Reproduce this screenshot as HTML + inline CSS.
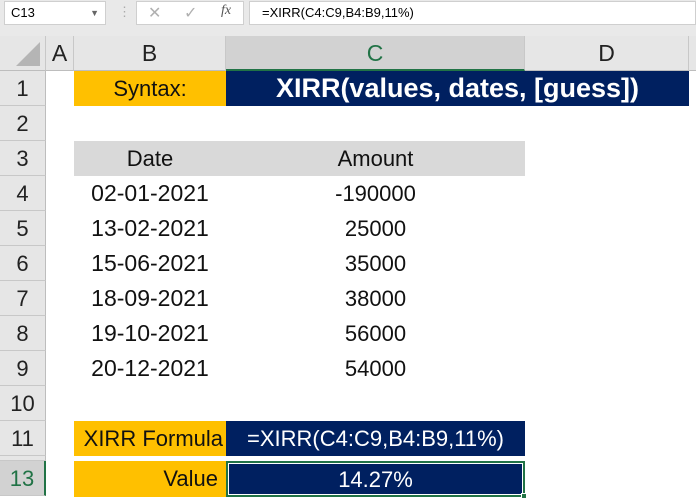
<!DOCTYPE html>
<html><head><style>
*{margin:0;padding:0;box-sizing:border-box}
body{width:696px;height:501px;overflow:hidden;background:#fff;font-family:"Liberation Sans",sans-serif;position:relative}
.a{position:absolute}
.rh{position:absolute;left:0;width:46px;background:#e6e6e6;border-bottom:1px solid #c8c8c8;border-right:1px solid #bdbdbd;text-align:center;font-size:22px;color:#222;height:35px;line-height:35px}
.ch{position:absolute;top:36px;height:35px;background:#e6e6e6;border-right:1px solid #c8c8c8;border-bottom:1px solid #bdbdbd;text-align:center;font-size:23px;line-height:34px;color:#222}
.t{position:absolute;font-size:22px;height:35px;line-height:35px;color:#111;white-space:nowrap}
</style></head><body>
<div class="a" style="left:0;top:0;width:696px;height:36px;background:#e9e9e9"></div>
<div class="a" style="left:4px;top:1px;width:102px;height:24px;background:#fff;border:1px solid #cfcfcf;font-size:13px;line-height:22px;padding-left:6px">C13<span style="position:absolute;right:6px;top:0;font-size:9px;color:#666">▼</span></div>
<div class="a" style="left:118px;top:4px;color:#aaa;font-size:13px">⋮</div>
<div class="a" style="left:136px;top:1px;width:108px;height:24px;background:#fff;border:1px solid #cfcfcf"></div>
<div class="a" style="left:148px;top:3px;color:#b0b0b0;font-size:16px">✕</div>
<div class="a" style="left:184px;top:3px;color:#b0b0b0;font-size:16px">✓</div>
<div class="a" style="left:221px;top:3px;color:#555;font-size:14px;font-style:italic;font-family:'Liberation Serif',serif">fx</div>
<div class="a" style="left:249px;top:1px;width:447px;height:24px;background:#fff;border:1px solid #cfcfcf;font-size:13px;line-height:22px;padding-left:12px">=XIRR(C4:C9,B4:B9,11%)</div>

<div class="ch" style="left:0;width:46px"><div style="position:absolute;right:5px;bottom:4px;width:0;height:0;border-left:24px solid transparent;border-bottom:24px solid #b5b5b5"></div></div>
<div class="ch" style="left:46px;width:28px">A</div>
<div class="ch" style="left:74px;width:152px">B</div>
<div class="ch" style="left:226px;width:299px;background:#d2d2d2;color:#217346;border-bottom:2px solid #217346">C</div>
<div class="ch" style="left:525px;width:164px">D</div>
<div class="ch" style="left:689px;width:10px"></div>

<div class="rh" style="top:71px">1</div>
<div class="rh" style="top:106px">2</div>
<div class="rh" style="top:141px">3</div>
<div class="rh" style="top:176px">4</div>
<div class="rh" style="top:211px">5</div>
<div class="rh" style="top:246px">6</div>
<div class="rh" style="top:281px">7</div>
<div class="rh" style="top:316px">8</div>
<div class="rh" style="top:351px">9</div>
<div class="rh" style="top:386px">10</div>
<div class="rh" style="top:421px">11</div>
<div class="rh" style="top:461px;background:#d2d2d2;color:#217346;border-right:2px solid #217346">13</div>
<div class="a" style="left:0;top:456px;width:46px;height:5px;background:#e6e6e6;border-right:1px solid #bdbdbd;border-bottom:1px solid #c8c8c8"></div>

<div class="a" style="left:74px;top:71px;width:152px;height:35px;background:#ffc000"></div>
<div class="t" style="left:74px;top:71px;width:152px;text-align:center">Syntax:</div>
<div class="a" style="left:226px;top:71px;width:463px;height:35px;background:#002060"></div>
<div class="t" style="left:226px;top:71px;width:463px;text-align:center;color:#fff;font-weight:bold;font-size:27px">XIRR(values, dates, [guess])</div>

<div class="a" style="left:74px;top:141px;width:451px;height:35px;background:#d9d9d9"></div>
<div class="t" style="left:74px;top:141px;width:152px;text-align:center">Date</div>
<div class="t" style="left:226px;top:141px;width:299px;text-align:center">Amount</div>

<div class="t" style="left:74px;top:176px;width:152px;text-align:center;font-size:23px">02-01-2021</div>
<div class="t" style="left:74px;top:211px;width:152px;text-align:center;font-size:23px">13-02-2021</div>
<div class="t" style="left:74px;top:246px;width:152px;text-align:center;font-size:23px">15-06-2021</div>
<div class="t" style="left:74px;top:281px;width:152px;text-align:center;font-size:23px">18-09-2021</div>
<div class="t" style="left:74px;top:316px;width:152px;text-align:center;font-size:23px">19-10-2021</div>
<div class="t" style="left:74px;top:351px;width:152px;text-align:center;font-size:23px">20-12-2021</div>
<div class="t" style="left:226px;top:176px;width:299px;text-align:center">-190000</div>
<div class="t" style="left:226px;top:211px;width:299px;text-align:center">25000</div>
<div class="t" style="left:226px;top:246px;width:299px;text-align:center">35000</div>
<div class="t" style="left:226px;top:281px;width:299px;text-align:center">38000</div>
<div class="t" style="left:226px;top:316px;width:299px;text-align:center">56000</div>
<div class="t" style="left:226px;top:351px;width:299px;text-align:center">54000</div>

<div class="a" style="left:74px;top:421px;width:152px;height:35px;background:#ffc000"></div>
<div class="t" style="left:74px;top:421px;width:152px;text-align:right;padding-right:3px">XIRR Formula</div>
<div class="a" style="left:226px;top:421px;width:299px;height:35px;background:#002060"></div>
<div class="t" style="left:226px;top:421px;width:299px;text-align:center;color:#fff">=XIRR(C4:C9,B4:B9,11%)</div>

<div class="a" style="left:74px;top:461px;width:152px;height:36px;background:#ffc000"></div>
<div class="t" style="left:74px;top:461px;width:152px;text-align:right;padding-right:8px">Value</div>
<div class="a" style="left:226px;top:461px;width:299px;height:36px;background:#002060;border:2px solid #217346;outline:1px solid #fff;outline-offset:-3px"></div>
<div class="t" style="left:226px;top:462px;width:299px;text-align:center;color:#fff">14.27%</div>
<div class="a" style="left:521px;top:493px;width:6px;height:6px;background:#217346;border:1px solid #fff"></div>
</body></html>
